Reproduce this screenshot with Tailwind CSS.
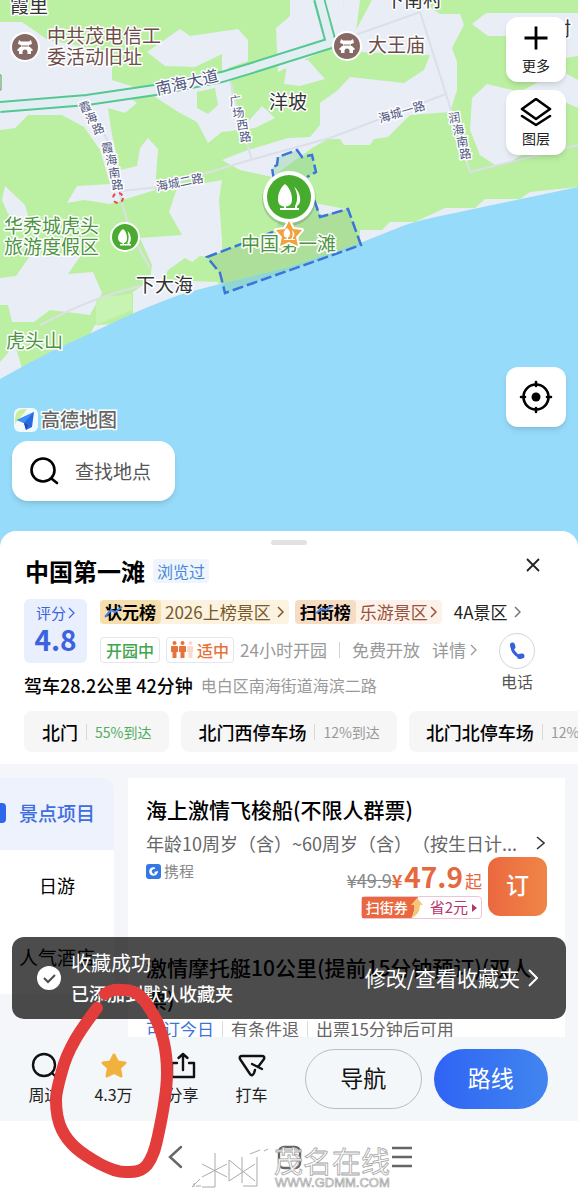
<!DOCTYPE html>
<html lang="zh-CN">
<head>
    <meta charset="UTF-8">
    <meta name="viewport" content="width=device-width, initial-scale=1">
    <title>中国第一滩</title>
    <script src="https://cdn.jsdelivr.net/npm/@tailwindcss/browser@4"></script>
</head>
<body class="bg-white text-black font-['Noto_Sans_CJK_SC',sans-serif]">
    <div class="relative flex h-screen flex-col overflow-hidden">

        <!-- Mapa -->
        <section class="relative h-[531px] shrink-0">
            <svg class="absolute inset-x-0 top-0 h-[560px] w-full" viewBox="0 0 578 560" preserveAspectRatio="xMidYMin slice">
                <rect width="578" height="560" fill="#bbefa1"/>
                <g fill="#e9eef6">
                    <path d="M0 22H22L48 40 112 52V80L137 88 60 100 0 104Z"/>
                    <path d="M0 110L130 98 137 103 125 113 108 108 112 135 120 170 137 166 140 148 148 138 158 149 155 190 110 204 84 200 67 203 77 186 110 184 100 150 84 127 62 115H28L15 128 0 130Z"/>
                    <path d="M147 52L180 29 190 36 238 29 248 40V61L228 68 232 96 248 122 262 106 275 118 255 128 222 132 208 143 197 122 180 113 152 95 222 77V54L195 67 165 66Z"/>
                    <path d="M276 28L290 16V0H343L347 40 325 50 278 72Z"/>
                    <path d="M288 58L308 60 325 79 300 86 284 84Z"/>
                    <path d="M343 0H360L356 32 346 38ZM355 32L372 0H420L440 14H460L464 25 452 48 457 62V90L450 112 410 115 388 137 374 139 370 145H344L340 139 328 139 312 148 272 177 240 170 222 160 245 151 288 138 310 137 320 125V103L338 90 350 77 404 83 424 70 430 55 362 52Z"/>
                    <path d="M472 24L486 13H578V56L552 60 510 36H488Z"/>
                    <path d="M472 98L487 84 520 92 560 70 578 80V105L578 108 560 100 555 120 530 150 510 162 495 165 480 155 470 130Z"/>
                    <path d="M177 188L222 180 219 200 222 240V258L200 256 192 262 185 258 168 270 160 288 133 312V292L150 280 152 265 140 238 182 235 169 212Z"/>
                    <path d="M5 186L25 205 30 222 8 214 2 200Z"/>
                    <path d="M0 278L16 276 30 256 82 254 68 274 93 272 102 293 90 315 50 310 34 322H12L8 305H0Z"/>
                    <path d="M133 312V292L160 280 218 282 220 290 133 320ZM84 345L95 325 122 324ZM0 362L15 345 22 368 0 382Z"/>
                    <path d="M315 203L345 209 322 217ZM360 230H382L390 222H415L445 208H475L485 199H520L530 192 578 187V200L360 250Z"/>
                </g>
                <path d="M197 92L215 88 218 105 208 114 197 108Z" fill="#bbefa1"/>
                <path d="M96 298L132 294V310L96 325Z" fill="#c7f3b3"/>
                <!-- Mar -->
                <path d="M0 379Q30 362 60 347 90 334 110 324 150 305 185 293L220 284 290 267 360 243 400 227Q418 220 450 214L578 187V560H0Z" fill="#96dbf9"/>
                <!-- Ruas -->
                <g fill="none" stroke="#dcdfe8" stroke-width="2">
                    <path d="M88 100L112 150 120 195 130 232 150 268"/>
                    <path d="M120 191L160 187 250 160 330 138 430 100 446 94"/>
                    <path d="M228 72L240 120 252 160"/>
                    <path d="M347 38L420 12 446 94 470 172 578 145"/>
                    <path d="M40 325Q90 298 140 286"/>
                </g>
                <g fill="none">
                    <path d="M0 107L87 100 155 90 222 77 255 67 331 43 319 -1" stroke="#54c795" stroke-width="12"/>
                    <path d="M-1 107L87 100 155 90 222 77 255 67 331 43 319 -2" stroke="#e3eef3" stroke-width="8"/>
                </g>
                <circle cx="118" cy="198" r="5" fill="none" stroke="#e0484b" stroke-width="2" stroke-dasharray="4 4"/>
                <path d="M-2 75H1V90H-2" fill="none" stroke="#5a9b55"/>
                <!-- Área da praia -->
                <path d="M207 257L227 250 273 232 284 214 307 177 316 172 312 155 302 157 297 150 278 157 277 165 272 168 273 177 290 205 315 200 320 217 348 209 361 245 225 293 220 273Z" fill="#8ccf9a" fill-opacity=".4"/>
                <path d="M207 257L227 250 273 232 300 220 345 210 361 243 222 283 220 273Z" fill="#addf9b"/>
                <path d="M273 232L207 257 220 273 225 293 361 245 348 209 320 217 314 199M274 180L272 168 277 165 278 157 297 150 302 157 312 155 316 172 307 177" fill="none" stroke="#3b74dc" stroke-width="2.5" stroke-dasharray="11 4"/>
                <!-- Textos do mapa -->
                <g stroke="#fff" stroke-width="3" stroke-linejoin="round" paint-order="stroke" font-size="19" fill="#333">
                    <text x="10" y="13">霞里</text>
                    <text x="385" y="7">下南村</text>
                    <text x="552" y="36">村</text>
                    <text x="269" y="109">洋坡</text>
                    <text x="136" y="292">下大海</text>
                    <g fill="#6d4d49">
                        <text x="47" y="43">中共茂电信工</text>
                        <text x="47" y="64">委活动旧址</text>
                        <text x="368" y="52">大王庙</text>
                    </g>
                    <g fill="#4c9440">
                        <text x="4" y="233">华秀城虎头</text>
                        <text x="4" y="254">旅游度假区</text>
                        <text x="6" y="348">虎头山</text>
                        <text x="241" y="251">中国第一滩</text>
                    </g>
                    <g fill="#50577f" font-size="16">
                        <text transform="translate(157 95) rotate(-13)">南海大道</text>
                        <g font-size="12">
                            <text transform="translate(157 191) rotate(-11)">海城二路</text>
                            <text transform="translate(380 123) rotate(-17)">海城一路</text>
                            <text x="81 87 94" y="113 124 135" rotate="-20">霞海路</text>
                            <text x="102 106 109 112" y="153 165 178 190" rotate="-8">霞海南路</text>
                            <text x="230 233 237 240" y="106 118 130 142" rotate="-8">广场西路</text>
                            <text x="449 453 457 460" y="123 135 147 159" rotate="-8">润海南路</text>
                        </g>
                    </g>
                </g>
                <!-- Marcadores -->
                <g>
                    <circle cx="25" cy="47" r="15" fill="#fff"/><circle cx="25" cy="47" r="13" fill="#866964"/>
                    <path id="templo" d="M19 40L21 41.500H29L31 40 32 44 29 45V47H30L33 50 32 51H31V54H27.500V52A2.500 2.500 0 0 0 22.500 52V54H19V51H18L17 50 20 47H21V45L18 44Z" fill="#fff"/>
                    <path d="M21.500 46H28.500" stroke="#866964"/>
                    <circle cx="347" cy="46" r="15" fill="#fff"/><circle cx="347" cy="46" r="13" fill="#866964"/>
                    <use href="#templo" x="322" y="-1"/>
                    <path d="M343.500 45H350.500" stroke="#866964"/>
                </g>
                <circle cx="125" cy="237" r="15" fill="#fff"/><circle cx="125" cy="237" r="13" fill="#4aab32"/>
                <path d="M123 229C120 231 118 235 118 238C118 241 120 242.500 122.500 243V244H120V245.500H131V244H129.500V243C132 241 131 234 127.500 231C129 235 129 240 127.500 242.500V244H124V243C126 242.500 127 241 127 238C127 235 126 231 123 229Z" fill="#fff"/>
                <circle cx="289" cy="199" r="27" fill="#5d7a5d" fill-opacity=".3"/>
                <circle cx="289" cy="197" r="26" fill="#fff"/><circle cx="289" cy="197" r="22" fill="#47ac2d"/>
                <path d="M285 184C281 187 278 193 278 199C278 204 280 206 284 206.500V208H280V210H299V208H297V206C303 203 300 191 294 187C298 193 298 201 295 206V208H286V206.500C290 206 292 204 292 199C292 193 289 187 285 184Z" fill="#fff"/>
                <path d="M289 221L293 229 302 230 296 237 298 246 289 242 280 246 282 237 276 230 285 229Z" fill="#f2a13c" stroke="#fff" stroke-width="4" stroke-linejoin="round" paint-order="stroke"/>
                <path d="M287 228C284 230 283 233 284 236 285 237 286 237.500 286.500 237.500V239H284V240H295V239H293V237.500C295 236 295 233 292 230 293 234 293 237 291 239H288V237.500C291 236 291 231 287 228Z" fill="#fff"/>
                <!-- Logo do mapa -->
                <rect x="14" y="408" width="24" height="24" rx="6" fill="#f2faff"/>
                <path d="M15 420Q15 409 24 409L27 409 15 424Z" fill="#c9ef98"/>
                <path d="M34 412L17 420 24 423 26 430 32 427Z" fill="#2968dd"/>
                <path d="M34 412L17 420 24 423Z" fill="#3f8df5"/>
                <path d="M24 423L26 430 28 425Z" fill="#1b4aa8"/>
                <text x="41" y="427" font-size="19" font-weight="500" fill="#666" stroke="#fff" stroke-width="3" paint-order="stroke">高德地图</text>
            </svg>

            <div class="absolute top-[17px] right-3 flex flex-col gap-2">
                <button class="flex h-[65px] w-[60px] flex-col items-center justify-center gap-1 rounded-xl bg-white text-sm leading-5 text-[#222] shadow-md">
                    <svg width="26" height="26" viewBox="0 0 26 26" fill="none" stroke="#000" stroke-width="2.800"><path d="M13 1.500V24.500M1.500 13H24.500"/></svg>
                    更多
                </button>
                <button class="flex h-[65px] w-[60px] flex-col items-center justify-center rounded-xl bg-white text-sm leading-5 text-[#222] shadow-md">
                    <svg width="32" height="30" viewBox="0 0 32 30" fill="none" stroke="#000" stroke-width="2.600" stroke-linejoin="round" stroke-linecap="round"><path d="M16 1L30 11 16 21 2 11ZM2 18L16 27 30 18"/></svg>
                    图层
                </button>
            </div>
            <button aria-label="定位" class="absolute right-3 bottom-[104px] flex size-[60px] items-center justify-center rounded-xl bg-white shadow-md">
                <svg width="34" height="34" viewBox="0 0 34 34" fill="none" stroke="#000" stroke-width="2.600" stroke-linecap="round"><circle cx="17" cy="17" r="12.500"/><circle cx="17" cy="17" r="4.500" fill="#000" stroke="none"/><path d="M17 2V6M17 28V32M2 17H6M28 17H32"/></svg>
            </button>
            <button class="absolute bottom-[30px] left-3 flex h-[60px] items-center gap-4 rounded-2xl bg-white pr-6 pl-[17px] text-[19px] text-[#555] shadow-md">
                <svg width="30" height="30" viewBox="0 0 30 30" fill="none" stroke="#000" stroke-width="2.600" stroke-linecap="round"><circle cx="14" cy="14" r="11.500"/><path d="M23 23L28 27"/></svg>
                查找地点
            </button>
        </section>

        <!-- Painel do local -->
        <section class="relative shrink-0 rounded-t-2xl bg-white pt-[9px] pb-3">
            <div class="mx-auto h-[5px] w-9 rounded-full bg-[#e2e2e2]"></div>
            <div class="flex h-[54px] items-center pr-[38px] pb-[3px] pl-[25px]">
                <h1 class="text-2xl font-bold">中国第一滩</h1>
                <span class="ml-2 rounded-sm bg-[#eef5fd] px-1 text-base leading-6 text-[#4a86d9]">浏览过</span>
                <button aria-label="关闭" class="-mt-3 ml-auto">
                    <svg width="14" height="14" viewBox="0 0 14 14" fill="none" stroke="#222" stroke-width="1.800"><path d="M1 1L13 13M13 1L1 13"/></svg>
                </button>
            </div>

            <div class="flex gap-[13px] pl-6">
                <a href="#" class="flex h-16 w-[63px] flex-col items-center justify-center rounded-md bg-[#e9effd] pb-1 text-[#3b62e0]">
                    <span class="flex items-center gap-[2px] text-[15px] leading-5">评分<svg width="7" height="12" viewBox="0 0 7 12" fill="none" stroke="currentColor" stroke-width="1.200"><path d="M1 1L6 6 1 11"/></svg></span>
                    <b class="text-[28px] leading-8">4.8</b>
                </a>
                <div class="min-w-0 flex-1">
                    <div class="flex h-[25px] items-center text-[17px] leading-[24px] whitespace-nowrap">
                        <a href="#" class="flex items-center rounded-sm bg-[#fbf2df] pr-[5px] text-[#77592b]">
                            <span class="relative mr-1 rounded-sm bg-[#f6dfac] px-[5px] font-bold text-black">状元榜
                                <svg class="absolute top-1 left-1" width="20" height="16" viewBox="0 0 20 16" fill="none" stroke="#4e83e8" stroke-width="2"><path d="M1 13L7 6 11 8 18 3"/></svg>
                            </span>
                            2026上榜景区
                            <svg class="ml-[6px]" width="7" height="12" viewBox="0 0 7 12" fill="none" stroke="currentColor" stroke-width="1.500"><path d="M1 1L6 6 1 11"/></svg>
                        </a>
                        <a href="#" class="ml-[6px] flex items-center rounded-sm bg-[#fdf2ea] pr-[5px] text-[#96523c]">
                            <span class="relative mr-1 rounded-sm bg-[#f7dcc4] px-[5px] font-bold text-black">扫街榜
                                <svg class="absolute top-1 left-5" width="20" height="14" viewBox="0 0 20 14" fill="none" stroke="#4e83e8" stroke-width="2"><path d="M1 9L7 5 11 6 18 2"/></svg>
                            </span>
                            乐游景区
                            <svg class="ml-[2px]" width="7" height="12" viewBox="0 0 7 12" fill="none" stroke="currentColor" stroke-width="1.500"><path d="M1 1L6 6 1 11"/></svg>
                        </a>
                        <a href="#" class="ml-3 flex items-center gap-[6px] text-[#222]">4A景区
                            <svg width="7" height="12" viewBox="0 0 7 12" fill="none" stroke="#777" stroke-width="1.500"><path d="M1 1L6 6 1 11"/></svg>
                        </a>
                    </div>
                    <div class="mt-3 flex h-[27px] items-center text-[17px] whitespace-nowrap text-[#999]">
                        <span class="rounded-sm border border-[#e3e6ea] px-[5px] text-base leading-6 font-medium text-[#3fa64d]">开园中</span>
                        <span class="ml-[6px] flex items-center gap-1 rounded-sm border border-[#e3e6ea] px-1 text-base leading-6 font-medium text-[#e5733a]">
                            <svg width="22" height="17" viewBox="0 0 22 17" fill="#e5733a"><g id="gente"><circle cx="3.500" cy="2" r="2"/><path d="M1 5H6Q7 5 7 6V11H5.500V17H1.500V11H0V6Q0 5 1 5Z"/></g><use href="#gente" x="8"/><use href="#gente" x="16" opacity=".25"/></svg>
                            适中
                        </span>
                        <span class="ml-[6px]">24小时开园</span>
                        <i class="mx-3 h-4 w-px bg-[#d5d5d5]"></i>
                        <span>免费开放</span>
                        <a href="#" class="ml-3 flex items-center gap-1">详情<svg width="7" height="12" viewBox="0 0 7 12" fill="none" stroke="currentColor" stroke-width="1.300"><path d="M1 1L6 6 1 11"/></svg></a>
                    </div>
                </div>
            </div>

            <div class="mt-2 flex items-center gap-2 pl-6 leading-7 whitespace-nowrap">
                <span class="text-lg leading-7 font-medium">驾车28.2公里 42分钟</span>
                <span class="text-base leading-7 text-[#999]">电白区南海街道海滨二路</span>
            </div>
            <button class="absolute top-[102px] right-[43px] flex flex-col items-center text-base leading-6 text-[#555]">
                <span class="flex size-9 items-center justify-center rounded-full border border-[#d3d3df]">
                    <svg width="16" height="18" viewBox="0 0 16 18" fill="none" stroke="#3461dc" stroke-linecap="round" stroke-width="3"><path d="M3 4Q3 11 11 15"/><path d="M3.500 3L4 5M10.500 14.500L13 14" stroke-width="5"/></svg>
                </span>
                电话
            </button>

            <div class="mt-3 flex gap-3 overflow-hidden pl-6 text-lg leading-[40px] font-medium whitespace-nowrap">
                <a href="#" class="flex h-[41px] shrink-0 items-center rounded-lg bg-[#f6f6f7] px-[18px]">北门<i class="mx-2 h-4 w-px bg-[#d8d8d8]"></i><span class="text-sm leading-[40px] font-normal text-[#4fae5c]">55%到达</span></a>
                <a href="#" class="flex h-[41px] shrink-0 items-center rounded-lg bg-[#f6f6f7] px-[17px]">北门西停车场<i class="mx-2 h-4 w-px bg-[#d8d8d8]"></i><span class="text-sm leading-[40px] font-normal text-[#999]">12%到达</span></a>
                <a href="#" class="flex h-[41px] shrink-0 items-center rounded-lg bg-[#f6f6f7] px-[17px]">北门北停车场<i class="mx-2 h-4 w-px bg-[#d8d8d8]"></i><span class="text-sm leading-[40px] font-normal text-[#999]">12%到达</span></a>
            </div>
        </section>

        <!-- Lista de ingressos -->
        <section class="flex min-h-0 flex-1 items-start gap-[14px] overflow-hidden bg-[#f4f6f9] pt-[14px] pr-[13px]">
            <nav class="w-[114px] shrink-0 overflow-hidden rounded-r-xl bg-white text-center leading-[70px]">
                <a href="#" class="relative block h-[72px] bg-[#edf2fc] text-[19px] font-medium text-[#3f6ee0]"><i class="absolute top-[25px] left-0 h-5 w-[6px] rounded-r-sm bg-[#2f66ee]"></i>景点项目</a>
                <a href="#" class="block h-[72px] text-lg leading-[70px]">日游</a>
                <a href="#" class="block h-[72px] text-[19px]">人气酒店</a>
            </nav>
            <div class="min-w-0 flex-1 bg-white px-[18px] pt-[15px]">
                <article>
                    <h2 class="text-[21px] leading-8 font-medium">海上激情飞梭船(不限人群票)</h2>
                    <div class="flex items-center justify-between text-lg leading-9 text-[#666]">
                        <p class="whitespace-nowrap [text-spacing-trim:space-all]">年龄10周岁（含）~60周岁（含）（按生日计...</p>
                        <svg class="mr-[2px] shrink-0" width="9" height="14" viewBox="0 0 9 14" fill="none" stroke="#333" stroke-width="1.500"><path d="M1 1L8 7 1 13"/></svg>
                    </div>
                    <div class="flex items-start">
                        <span class="flex items-center gap-[3px] text-[15px] leading-5 text-[#888]">
                            <svg width="15" height="15" viewBox="0 0 15 15"><rect width="15" height="15" rx="3" fill="#3577e5"/><path d="M9 3.500C4 2 2 7 4 10 6 13 12 12 12 7L8 8C10 9 8 11 6.500 9 5 7 6 5 9 5Z" fill="#fff"/></svg>
                            携程
                        </span>
                        <div class="ml-auto flex flex-col items-end">
                            <div class="flex items-baseline text-lg leading-[31px] text-[#e5683f]">
                                <s class="text-[#888]">¥49.9</s><b>¥</b><b class="ml-[2px] text-[28px] leading-[31px]">47.9</b><span class="ml-[2px] text-[17px]">起</span>
                            </div>
                            <a href="#" class="relative flex h-[23px] items-center rounded-sm border border-[#f0c4d2] pr-1 text-[15px] text-[#b8366b]">
                                <span class="mr-[18px] h-full bg-[#e9683f] pr-1 pl-1 text-sm leading-[21px] font-medium text-white">扫街券</span>
                                <svg class="absolute top-0 left-[46px]" width="16" height="21" viewBox="0 0 16 21"><path d="M0 0H10L4 21H0Z" fill="#e9683f"/><path d="M9 1L15 8H12Q12 18 3 21 7 16 6 8H3Z" fill="#f5c677"/></svg>
                                省2元
                                <svg class="ml-1" width="5" height="8" viewBox="0 0 5 8"><path d="M0 0L5 4 0 8Z" fill="currentColor"/></svg>
                            </a>
                        </div>
                        <button class="-mt-1 ml-[6px] size-[59px] rounded-xl bg-linear-to-r from-[#ea6840] to-[#f08547] pb-1 text-[23px] font-medium text-white">订</button>
                    </div>
                </article>
                <article class="mt-8">
                    <h2 class="text-[21px] leading-8 font-medium">激情摩托艇10公里(提前15分钟预订)(双人票)</h2>
                    <p class="flex items-center gap-2 text-[17px] leading-7 whitespace-nowrap text-[#666]">
                        <span class="text-[#3b74dc]">可订今日</span><i class="h-4 w-px bg-[#ddd]"></i>有条件退<i class="h-4 w-px bg-[#ddd]"></i>出票15分钟后可用
                    </p>
                </article>
            </div>
        </section>

        <!-- Barra de ações -->
        <footer class="flex h-[84px] shrink-0 items-center bg-[#f4f7fa] pr-[30px] pl-[10px]">
            <div class="grid w-[276px] shrink-0 grid-cols-4 text-base leading-6 text-[#222]">
                <button class="flex flex-col items-center gap-[2px]">
                    <svg width="28" height="28" viewBox="0 0 28 28" fill="none" stroke="#111" stroke-width="2.400" stroke-linecap="round"><circle cx="13" cy="13" r="11"/><path d="M21 21L25 25"/></svg>周边
                </button>
                <button class="flex flex-col items-center gap-[2px]">
                    <svg width="28" height="28" viewBox="0 0 28 28" fill="#f0b13d" stroke="#f0b13d" stroke-width="3" stroke-linejoin="round"><path d="M14 3L17.500 10 25 11 19.500 16 21 24 14 20.500 7 24 8.500 16 3 11 10.500 10Z"/></svg>4.3万
                </button>
                <button class="flex flex-col items-center gap-[2px]">
                    <svg width="28" height="28" viewBox="0 0 28 28" fill="none" stroke="#111" stroke-width="2.400" stroke-linecap="round" stroke-linejoin="round"><path d="M8 11H3V25H25V11H20M14 18V2M9.500 6L14 2 18.500 6"/></svg>分享
                </button>
                <button class="flex flex-col items-center gap-[2px]">
                    <svg width="28" height="28" viewBox="0 0 28 28" fill="none" stroke="#111" stroke-width="2.400" stroke-linecap="round" stroke-linejoin="round"><path d="M20 15L26 7Q27 4 24 4H4Q1 4 2 7L12 22Q14 25 16 21L17 18M14 12L24 17"/></svg>打车
                </button>
            </div>
            <div class="ml-[19px] flex flex-1 gap-3 text-[23px]">
                <button class="h-[60px] flex-1 rounded-full border border-[#b9bcc2] pb-[3px] text-[#111]">导航</button>
                <button class="h-[60px] flex-1 rounded-full bg-linear-to-r from-[#3063f5] to-[#4285ef] pb-[3px] text-white">路线</button>
            </div>
        </footer>

        <!-- Navegação do sistema -->
        <div class="h-[71px] shrink-0 bg-white">
            <svg class="h-full w-full" viewBox="0 0 578 71" preserveAspectRatio="xMidYMin slice" fill="none" stroke="#666" stroke-width="2.400">
                <path d="M181 26L170 36 181 46" stroke-linecap="round"/>
                <rect x="279" y="26" width="21" height="21" rx="5"/>
                <path d="M392 27H412M392 36H412M392 45H412"/>
                <g stroke="#aaa" stroke-width="1">
                    <path d="M202 43L227 56M202 56L227 43M215 32V66H202M229 39V60L255 43M229 39L255 60M242 36V62M257 36V65H243M192 66L200 58M194 66V62M250 33L260 29M264 30L268 28M196 65H201"/>
                </g>
                <g fill="#fff" stroke="#a5a5a5" stroke-width=".8">
                    <text x="274" y="52" font-size="29" font-weight="400">茂名在线</text>
                    <text x="275" y="66" font-size="13" stroke-width=".7" font-family="Liberation Sans">WWW.GDMM.COM</text>
                </g>
            </svg>
        </div>

        <!-- Aviso de favorito salvo -->
        <div role="status" class="absolute inset-x-3 bottom-[173px] flex h-[82px] items-center rounded-xl bg-black/70 pr-7 pl-[25px] text-white">
            <svg width="24" height="24" viewBox="0 0 24 24"><circle cx="12" cy="12" r="12" fill="#fff"/><path d="M7 12L11 16 18 9" fill="none" stroke="#4c4c4c" stroke-width="2"/></svg>
            <div class="ml-[10px]">
                <p class="text-xl leading-[30px]">收藏成功</p>
                <p class="text-lg leading-[30px] font-medium">已添加到默认收藏夹</p>
            </div>
            <a href="#" class="ml-auto flex items-center gap-2 text-[21px]">修改/查看收藏夹
                <svg width="10" height="18" viewBox="0 0 10 18" fill="none" stroke="#fff" stroke-width="2"><path d="M1 1L9 9 1 17"/></svg>
            </a>
        </div>

        <!-- Marca vermelha desenhada à mão -->
        <svg class="pointer-events-none absolute bottom-0 left-0" width="200" height="212" viewBox="0 980 200 212" fill="none" stroke="#e23c3b" stroke-width="12" stroke-linecap="round" stroke-linejoin="round">
            <path d="M97 1008C88 1020 80 1031 75 1040C67 1054 64 1063 62 1071C58 1085 56 1093 56 1100C56 1112 57 1120 62 1130C69 1144 80 1153 100 1164C112 1170 118 1172 126 1172C136 1172 142 1171 147 1165C154 1156 156 1145 158 1136C163 1113 167 1090 167 1073C167 1046 160 1024 150 1009C142 996 136 990 123 990C116 989 110 990 105 994"/>
        </svg>
    </div>
</body>
</html>
